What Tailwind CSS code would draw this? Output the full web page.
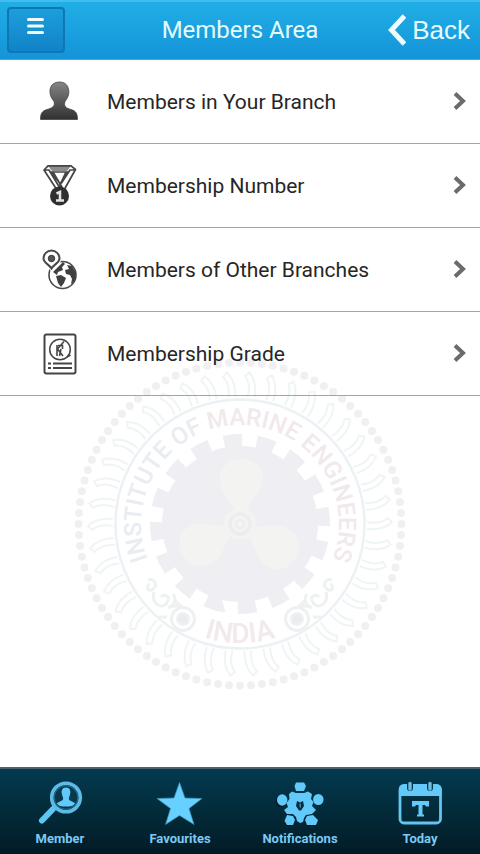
<!DOCTYPE html>
<html lang="en">
<head>
<meta charset="utf-8">
<meta name="viewport" content="width=device-width, initial-scale=1">
<title>Members Area</title>
<script src="https://cdn.jsdelivr.net/npm/@tailwindcss/browser@4"></script>
</head>
<body class="flex min-h-screen flex-col bg-white font-[Roboto,sans-serif] text-[#262626]">
<header class="grid h-[60px] shrink-0 grid-cols-[1fr_auto_1fr] items-center border-t-2 border-b border-t-[#41bdf0] border-b-[#5f9fc6] bg-linear-to-b from-[#21aee6] to-[#1494d8] px-[7px] pb-[2px]">
  <button type="button" aria-label="Menu" class="flex h-[46px] w-[58px] justify-center rounded-[4px] border-2 border-[#0f77b4] bg-linear-to-b from-[#1d9edb] to-[#1183c8] pt-2">
    <svg class="h-5 w-5" viewBox="0 0 20 20" stroke="#eefcff" stroke-width="3" stroke-linecap="round"><path d="M2.500 2.500H16.500M2.500 9H16.500M2.500 15.500H16.500"/></svg>
  </button>
  <h1 class="text-[24px] leading-7 text-[#e6fbff]">Members Area</h1>
  <a href="#back" class="flex items-center gap-[6px] justify-self-end pr-[3px] font-['Liberation_Sans',Arial,sans-serif] text-[26px] leading-7 text-[#e6fbff]">
    <svg class="h-8 w-[18px]" viewBox="0 0 18 32" fill="none" stroke="#effdff" stroke-width="5"><path d="M16.500 2L3.500 16L16.500 30"/></svg>Back</a>
</header>

<main class="relative flex-1">
  <svg id="seal" aria-hidden="true" class="pointer-events-none absolute top-[298px] left-1/2 h-[332px] w-[332px] -translate-x-1/2" viewBox="-166 -166 332 332" fill="none">
    <defs>
      <path id="arc-top" d="M0 99A99 99 0 0 1 0 -99A99 99 0 0 1 0 99"/>
      <path id="arc-bottom" d="M-119 0A119 119 0 0 0 119 0"/>
      <path id="leaf" d="M127 5C137 6 146 4 152 -2L148 -6C142 -1 136 0 127 -2"/>
      <g id="scroll">
        <circle cx="-57" cy="95" r="11.500"/><circle cx="-57" cy="95" r="5.500" fill="#e9ecee"/>
        <path d="M-92 56c7 -2 10 5 5 9s-8 -3 -3 -5M-86 68c-3 10 6 18 12 12s-1 -12 -5 -7M-72 84c6 -2 9 -9 5 -14M-73 93h-8M-66 76l7 6h-9"/>
      </g>
    </defs>
    <circle r="161.500" stroke="#f0f0f3" stroke-width="8" stroke-linecap="round" pathLength="92" stroke-dasharray="0 1"/>
    <g id="leaves" stroke="#eff4f5" stroke-width="2"></g>
    <circle r="124.500" stroke="#ebf1f4" stroke-width="2.500"/>
    <circle r="78" fill="#eeeef3"/>
    <circle r="83" stroke="#eeeef3" stroke-width="14" pathLength="160" stroke-dasharray="5.500 4.500" transform="rotate(-78.500)"/>
    <g fill="#f3f3f2">
      <path d="M-5 -12C-8 -24 -22 -31 -20 -47C-18 -71 22 -71 23 -47C24 -31 9 -24 6 -12Z"/>
      <path transform="rotate(120)" d="M-5 -12C-8 -24 -22 -31 -20 -47C-18 -71 22 -71 23 -47C24 -31 9 -24 6 -12Z"/>
      <path transform="rotate(240)" d="M-5 -12C-8 -24 -22 -31 -20 -47C-18 -71 22 -71 23 -47C24 -31 9 -24 6 -12Z"/>
      <circle r="16"/>
    </g>
    <circle r="10" stroke="#ececef" stroke-width="3"/><circle r="4" stroke="#ececef" stroke-width="2"/>
    <g class="font-[Roboto,sans-serif] font-medium" text-anchor="middle">
      <text class="text-[24px]" fill="#e9ecf0"><textPath href="#arc-top" startOffset="50%">INSTITUTE OF <tspan fill="#f1e9ec">MARINE ENGINEERS</tspan></textPath></text>
      <text class="text-[28px]" fill="#f1e9ec"><textPath href="#arc-bottom" startOffset="50%">INDIA</textPath></text>
    </g>
    <g stroke="#eef1f2" stroke-width="3"><use href="#scroll"/><use href="#scroll" transform="scale(-1 1)"/></g>
  </svg>

  <nav aria-label="Members" class="relative text-[21px] leading-7">
    <a href="#branch" class="flex h-[84px] items-center border-b border-[#a4a4a4] pr-[13px] pl-[39px]">
      <svg class="mr-7 h-[42px] w-10" viewBox="0 0 40 42"><defs><linearGradient id="shade" x2="0" y2="1"><stop stop-color="#858585"/><stop offset="1" stop-color="#303030"/></linearGradient></defs><path fill="url(#shade)" stroke="#444" stroke-width=".8" d="M20.500 1C14 1 10.500 5.500 11 11.500C11.300 15.500 13 18 15 20.500C16.500 25.500 13 27 8 28.500C3 30 1.500 32.500 1.500 38.500H38.500C38.500 32.500 37 30 32 28.500C27 27 24.500 25.500 26 20.500C28 18 29.500 15.500 29.800 11.500C30 5.500 27 1 20.500 1Z"/></svg>
      <span class="flex-1">Members in Your Branch</span>
      <svg class="h-5 w-[14px]" viewBox="0 0 14 20" fill="none" stroke="#6b6b6b" stroke-width="4"><path d="M2 1.500L10 9L2 16.500"/></svg>
    </a>
    <a href="#number" class="flex h-[84px] items-center border-b border-[#a4a4a4] pr-[13px] pl-[39px]">
      <svg class="mr-7 h-[42px] w-10" viewBox="0 1 40 42" fill="none"><path fill="#8c8c8c" d="M9 2H32L28 7H13Z"/><path stroke="#454545" stroke-width="1.700" stroke-linejoin="round" d="M9 1.800H32L36.500 5.500L25 26H18L5 6L9 1.800ZM5 6H10L21.500 25M36 6H31L22.500 19M12 8H29L21.500 20ZM14 8L23.500 24M27 8L19 25"/><circle cx="20.500" cy="32" r="9.500" fill="#303030"/><path stroke="#e5e5e5" stroke-width="2.500" d="M17.500 29.500L21 28V36M17 36.500H25"/></svg>
      <span class="flex-1">Membership Number</span>
      <svg class="h-5 w-[14px]" viewBox="0 0 14 20" fill="none" stroke="#6b6b6b" stroke-width="4"><path d="M2 1.500L10 9L2 16.500"/></svg>
    </a>
    <a href="#other" class="flex h-[84px] items-center border-b border-[#a4a4a4] pr-[13px] pl-[39px]">
      <svg class="mr-7 h-[42px] w-10" viewBox="0 -1 40 42"><circle cx="23.500" cy="25" r="13.500" fill="#fff" stroke="#4a4a4a" stroke-width="1.600"/><path fill="#404040" d="M17 19L24 12L26 14L23 17L24 20L19 22L18 25L14 22ZM17 26L22 25L27 28L25 33L22 37L19 33ZM28 15L33 16L37 23L36 31L32 34L33 29L31 25L27 24L26 20L30 19Z"/><path fill="#fff" stroke="#fff" stroke-width="4" d="M12.500 18.500C10 14 4.500 13 4.500 8.500a8 8 0 0 1 16 0C20.500 13 15 14 12.500 18.500Z"/><path fill="#fff" stroke="#484848" stroke-width="2" d="M12.500 18.500C10 14 4.500 13 4.500 8.500a8 8 0 0 1 16 0C20.500 13 15 14 12.500 18.500Z"/><circle cx="12.500" cy="8.500" r="3.200" fill="#555" stroke="#333"/></svg>
      <span class="flex-1">Members of Other Branches</span>
      <svg class="h-5 w-[14px]" viewBox="0 0 14 20" fill="none" stroke="#6b6b6b" stroke-width="4"><path d="M2 1.500L10 9L2 16.500"/></svg>
    </a>
    <a href="#grade" class="flex h-[84px] items-center border-b border-[#a4a4a4] pr-[13px] pl-[39px]">
      <svg class="mr-7 h-[42px] w-10" viewBox="0 0 40 42" fill="none" stroke="#454545"><rect x="5.500" y="1.500" width="31" height="39" rx="2" fill="#fff" stroke-width="2"/><circle cx="21" cy="16.500" r="10.300" stroke-width="1.500"/><path stroke-width="1.600" d="M18 12V23M25 8.500L18.500 16L24 23M19 12.500H23.500V16M22 16L20.500 23M28 24L31.500 22"/><path stroke-width="2" d="M9 30.500H12M14 30.500H33M9 35H12M14 35H33"/></svg>
      <span class="flex-1">Membership Grade</span>
      <svg class="h-5 w-[14px]" viewBox="0 0 14 20" fill="none" stroke="#6b6b6b" stroke-width="4"><path d="M2 1.500L10 9L2 16.500"/></svg>
    </a>
  </nav>
</main>

<nav aria-label="Sections" class="grid h-[87px] shrink-0 grid-cols-4 border-t-2 border-[#4f626b] bg-linear-to-b from-[#033a4f] to-[#021c26] pt-3 text-[13px] leading-4 font-bold text-[#7dc9f1]">
  <a href="#member" class="flex flex-col items-center gap-1">
    <svg class="h-[46px] w-12" viewBox="0 0 48 46"><path stroke="#5ec6f5" stroke-width="6" stroke-linecap="round" d="M6 39.500L17 28"/><circle cx="30" cy="16.500" r="14.300" fill="#06394c" stroke="#5dbce6" stroke-width="3.600"/><circle cx="30" cy="16.500" r="11.800" fill="none" stroke="#296f8e"/><path fill="#62cafa" d="M30 6.500C26 6.500 25 10 26 13.500C27 17 28 18 26 19.500L21 22C21.500 25 26 25.500 30 25.500S38.500 25 39 22L34 19.500C32 18 33 17 34 13.500C35 10 34 6.500 30 6.500Z"/></svg>Member</a>
  <a href="#favourites" class="flex flex-col items-center gap-1">
    <svg class="h-[46px] w-12" viewBox="0 0 48 46"><path fill="#67d0ff" stroke="#3795bd" stroke-width=".7" d="M23.500 1.500L29 17L46 17.500L33 27.500L38 43.500L23.500 34.500L9.500 43.500L14.500 27.500L1 17.500L18 17Z"/></svg>Favourites</a>
  <a href="#notifications" class="flex flex-col items-center gap-1">
    <svg class="h-[46px] w-12" viewBox="0 0 48 46"><g fill="#021c27"><circle cx="5" cy="20.500" r="5.500"/><circle cx="13" cy="41" r="4.500"/><circle cx="35" cy="41" r="4.500"/></g><g fill="#62cafa"><path d="M20 1.500H28L30 5L28 10H20L18.500 5Z"/><ellipse cx="6.200" cy="19" rx="5.200" ry="5.700"/><ellipse cx="42.300" cy="18.500" rx="5.200" ry="5.500"/><path d="M11 34L17 35L19 39L17 44H11L8.500 40ZM37 34L31 35L29 39L31 44H40L42 39Z"/><path d="M13 13L16 10.500L20 12H28L32 10.500L36 13L35 18L37.500 21L36 25L40 29L36 33L30 34L28 37L27 41L24 42L21 40L20 36L17 33L11 33L8 29L12 26L10.500 22L13.500 18Z"/></g><path fill="#062d3d" d="M21 20L24 21.500L27 20L28 25L25 29.500H23L20 25Z"/><path fill="#378db4" d="M23.500 22.500h1.500v4h-1.500z"/></svg>Notifications</a>
  <a href="#today" class="flex flex-col items-center gap-1">
    <svg class="h-[46px] w-12" viewBox="0 0 48 46" fill="none"><rect x="4" y="4.500" width="40.500" height="37.500" rx="4" stroke="#62c5f2" stroke-width="2.800"/><path fill="#62c9f9" d="M3 15V8Q3 3.500 8 3.500H41Q45.500 3.500 45.500 8V15Z"/><path stroke="#05374a" stroke-width="6" stroke-linecap="round" d="M14 3V7M34 3V7"/><path stroke="#6abce2" stroke-width="3.400" stroke-linecap="round" d="M14 2.500V8M34 2.500V8"/><path fill="#62c9f9" d="M16 20H33V25.500H30L29 24H26.500V33.500H28V35.500H21V33.500H22.500V24H20L19 25.500H16Z"/></svg>Today</a>
</nav>
<script>
  const leaves = document.getElementById("leaves");
  for (let i = 0; i < 42; i++) {
    const leaf = document.createElementNS("http://www.w3.org/2000/svg", "use");
    leaf.setAttribute("href", "#leaf");
    leaf.setAttribute("transform", `rotate(${i * 360 / 42})`);
    leaves.append(leaf);
  }
</script>
</body>
</html>
